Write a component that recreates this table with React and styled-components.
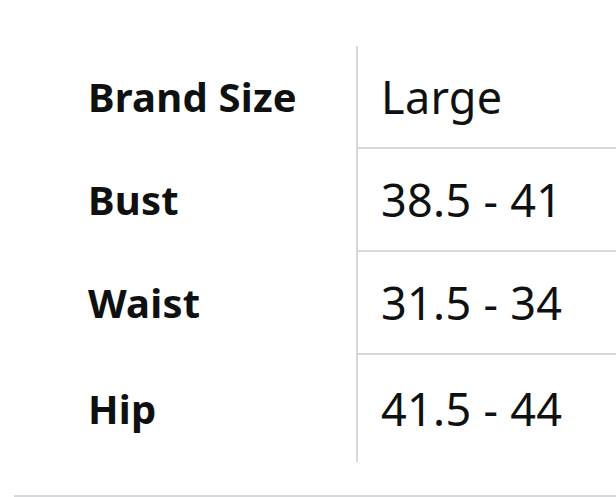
import React from "react";
import styled, { createGlobalStyle } from "styled-components";

const GlobalStyle = createGlobalStyle`
  html, body {
    margin: 0;
    padding: 0;
    background: #ffffff;
  }
  body {
    font-family: "Noto Sans", "Open Sans", Arial, sans-serif;
    color: #0f1111;
    overflow: hidden;
  }
`;

const Page = styled.div`
  width: 616px;
  height: 497px;
  padding: 46px 0 0 14px;
  box-sizing: border-box;
  overflow: hidden;
`;

const SizeTable = styled.div`
  display: grid;
  grid-template-columns: 342px 1fr;
  border-bottom: 2px solid #d5d9d9;
  padding-bottom: 33px;
`;

const Label = styled.div`
  display: flex;
  align-items: center;
  height: ${(props) => props.height}px;
  padding-left: 74px;
  font-size: 40px;
  font-weight: 700;
  letter-spacing: 0.2px;
  white-space: nowrap;
  margin-top: ${(props) => (props.first ? 0 : 2)}px;
`;

const Value = styled.div`
  display: flex;
  align-items: center;
  height: ${(props) => props.height}px;
  padding-left: 23px;
  border-left: 2px solid #d5d9d9;
  border-top: ${(props) => (props.first ? "none" : "2px solid #d5d9d9")};
  font-size: 45px;
  font-weight: 400;
  letter-spacing: 0.3px;
  white-space: nowrap;
`;

const rows = [
  { label: "Brand Size", value: "Large", height: 101 },
  { label: "Bust", value: "38.5 - 41", height: 101 },
  { label: "Waist", value: "31.5 - 34", height: 101 },
  { label: "Hip", value: "41.5 - 44", height: 107 },
];

export default function App() {
  return (
    <>
      <GlobalStyle />
      <Page>
        <SizeTable>
          {rows.map((row, i) => (
            <React.Fragment key={row.label}>
              <Label height={row.height} first={i === 0}>
                {row.label}
              </Label>
              <Value height={row.height} first={i === 0}>
                {row.value}
              </Value>
            </React.Fragment>
          ))}
        </SizeTable>
      </Page>
    </>
  );
}
